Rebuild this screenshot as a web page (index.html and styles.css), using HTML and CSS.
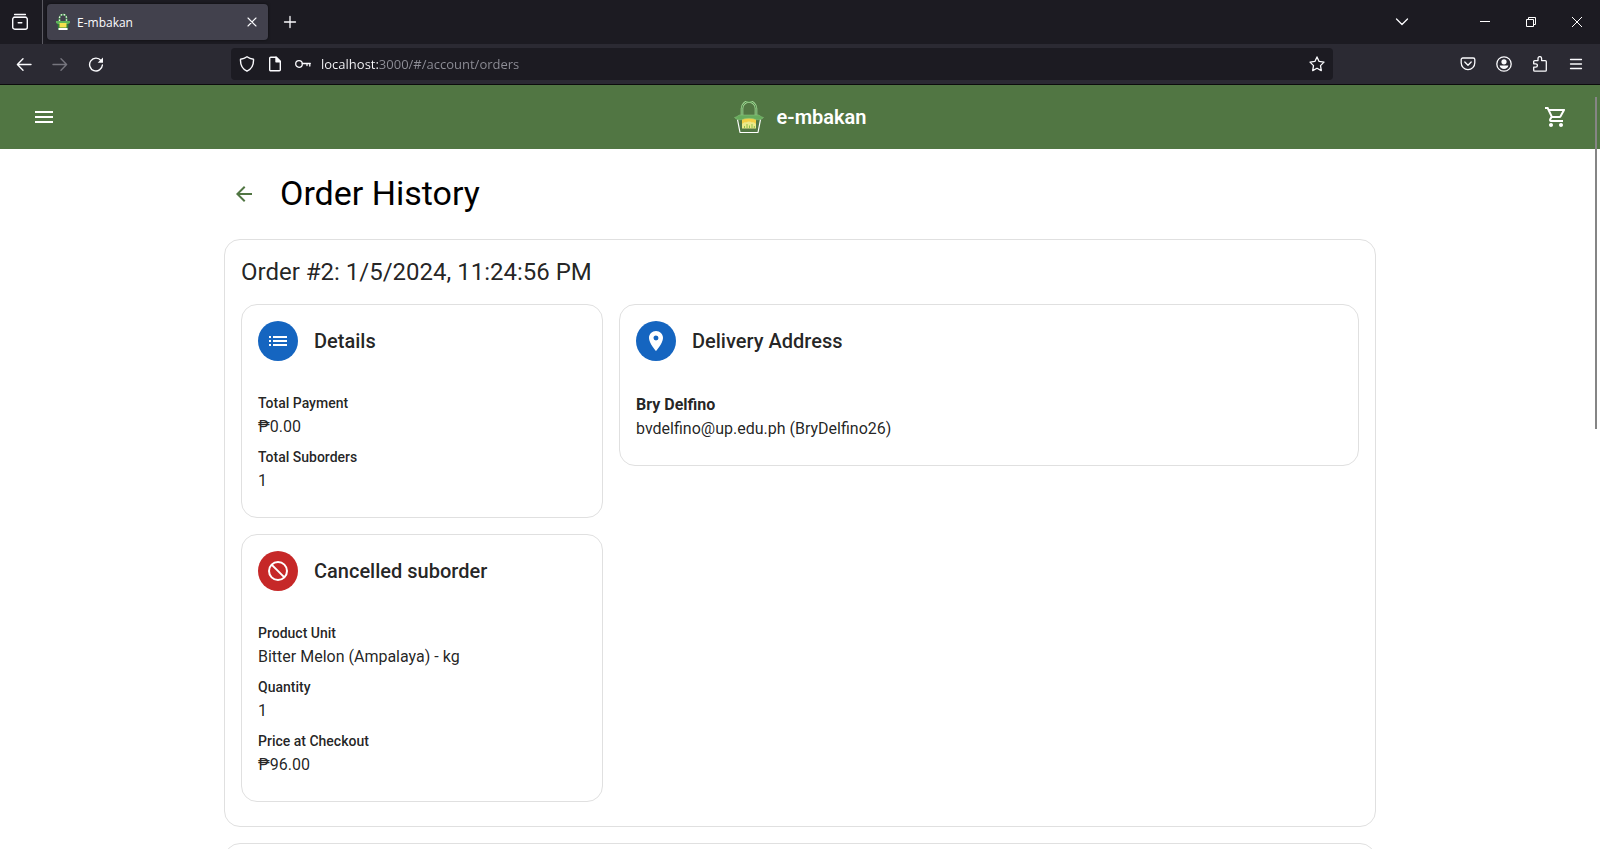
FILE: index.html
```html
<!DOCTYPE html>
<html lang="en">
<head>
<meta charset="utf-8">
<title>E-mbakan</title>
<link rel="stylesheet" href="styles.css">
</head>
<body>
<div class="window">
  <div class="tab-strip">
    <div class="tab-view">
      <button class="chrome-btn" aria-label="Recent browsing">
        <svg width="18" height="18" viewBox="0 0 18 18" fill="none" stroke="#fbfbfe" stroke-width="1.4" stroke-linecap="round"><path d="M3.6 1.5h10.8M2.8 4.2h12.4"/><rect x="1.7" y="4.4" width="14.6" height="11.8" rx="2"/><path d="M7.2 9.8h3.6"/></svg>
      </button>
    </div>
    <div class="tab">
      <svg width="16" height="18" viewBox="0 0 16 18"><path d="M4.500 8V5a3.500 3.500 0 0 1 7 0v3" fill="none" stroke="#3f9148" stroke-width="1.600"/><path d="M4.500 8V5a3.500 3.500 0 0 1 7 0v3" fill="none" stroke="#e4f4e0" stroke-width="1.400" stroke-dasharray="1.500 1.500"/><path d="M2.500 10h11l-.5 7H3z" fill="#2f7d3a"/><path d="M1 8h14v2l-2 1H3l-2-1z" fill="#5fb559"/><path d="M4.500 10h7v4.500h-7z" fill="#f5e14d"/><path d="M3.500 15h9v2h-9z" fill="#fff"/></svg>
      <span class="tab-label">E-mbakan</span>
      <button class="tab-close" aria-label="Close tab">
        <svg width="10" height="10" viewBox="0 0 10 10" stroke="#fbfbfe" stroke-width="1.1" stroke-linecap="round"><path d="M1 1l8 8M9 1l-8 8"/></svg>
      </button>
    </div>
    <button class="chrome-btn" aria-label="New tab">
      <svg width="14" height="14" viewBox="0 0 14 14" stroke="#fbfbfe" stroke-width="1.3" stroke-linecap="round"><path d="M7 1.500v11M1.500 7h11"/></svg>
    </button>
    <div class="spacer"></div>
    <button class="chrome-btn tab-list" aria-label="List all tabs">
      <svg width="14" height="14" viewBox="0 0 14 14" fill="none" stroke="#fbfbfe" stroke-width="1.3" stroke-linecap="round" stroke-linejoin="round"><path d="M1.500 4L7 9.500 12.500 4"/></svg>
    </button>
    <button class="win-btn" aria-label="Minimize"><svg width="10" height="10" viewBox="0 0 10 10" stroke="#fff"><path d="M0 4.500h10"/></svg></button>
    <button class="win-btn" aria-label="Restore"><svg width="10" height="10" viewBox="0 0 10 10" fill="none" stroke="#fff"><path d="M.5 2.500h7v7h-7zM2.500 2.500v-2h7v7h-2"/></svg></button>
    <button class="win-btn" aria-label="Close"><svg width="10" height="10" viewBox="0 0 10 10" stroke="#fff"><path d="M0 0l10 10M10 0L0 10"/></svg></button>
  </div>

  <div class="nav-bar">
    <button class="nav-btn" aria-label="Back"><svg width="16" height="16" viewBox="0 0 16 16" fill="none" stroke="#fbfbfe" stroke-width="1.400" stroke-linecap="round" stroke-linejoin="round"><path d="M15 8.500H1.500M7 2.800L1.400 8.500 7 14.200"/></svg></button>
    <button class="nav-btn" aria-label="Forward" disabled><svg width="16" height="16" viewBox="0 0 16 16" fill="none" stroke="#76757e" stroke-width="1.400" stroke-linecap="round" stroke-linejoin="round"><path d="M1 8.500h13.500M9 2.800l5.600 5.700L9 14.200"/></svg></button>
    <button class="nav-btn" aria-label="Reload"><svg width="16" height="16" viewBox="0 0 16 16"><path d="M13 4.500A6.400 6.400 0 1 0 14.400 9" fill="none" stroke="#fbfbfe" stroke-width="1.400" stroke-linecap="round"/><path d="M15 1.500v5.300h-5.300z" fill="#fbfbfe"/></svg></button>
    <div class="spacer"></div>
    <div class="url-bar">
      <svg width="16" height="16" viewBox="0 0 16 16" fill="none" stroke="#fbfbfe" stroke-width="1.400" stroke-linejoin="round"><path d="M8 .8c2 1.500 4 2.200 6.500 2.400.3 5.500-1.700 9.800-6.500 12-4.800-2.200-6.800-6.500-6.500-12C4 3 6 2.300 8 .8z"/></svg>
      <svg width="16" height="16" viewBox="0 0 16 16" fill="none" stroke="#fbfbfe" stroke-width="1.400" stroke-linejoin="round"><path d="M3.700 1.300h5.600l4 4v8.400a1 1 0 0 1-1 1H3.700a1 1 0 0 1-1-1V2.300a1 1 0 0 1 1-1z"/><path d="M9 1.300v4.400h4.300z" fill="#fbfbfe"/></svg>
      <svg width="16" height="16" viewBox="0 0 16 16" fill="none" stroke="#fbfbfe" stroke-width="1.300" stroke-linecap="round"><circle cx="4" cy="8" r="3.300"/><path d="M7.300 7.500h8M12 7.500v2M14.800 7.500v2.500"/></svg>
      <input class="url-input" type="text" aria-label="Address" value="localhost:3000/#/account/orders" spellcheck="false">
      <button class="star-btn" aria-label="Bookmark this page"><svg width="16" height="16" viewBox="0 0 16 16" fill="none" stroke="#fbfbfe" stroke-width="1.300" stroke-linejoin="round"><path d="M8 .9l2.100 4.500 4.900.7-3.500 3.500.8 5L8 12.200l-4.300 2.400.8-5L1 6.100l4.900-.7z"/></svg></button>
    </div>
    <div class="spacer"></div>
    <div class="nav-tools">
      <button class="nav-btn" aria-label="Save to Pocket"><svg width="16" height="16" viewBox="0 0 16 16" fill="none" stroke="#fbfbfe" stroke-width="1.300" stroke-linecap="round" stroke-linejoin="round"><path d="M2.800 2h10.400a1.600 1.600 0 0 1 1.600 1.600v3.200a6.800 6.800 0 0 1-13.600 0V3.600A1.600 1.600 0 0 1 2.800 2zM4.800 6L8 9.200 11.200 6"/></svg></button>
      <button class="nav-btn" aria-label="Account"><svg width="16" height="16" viewBox="0 0 16 16"><circle cx="8" cy="8" r="7.200" fill="none" stroke="#fbfbfe" stroke-width="1.300"/><circle cx="8" cy="5.800" r="2.600" fill="#fbfbfe"/><path d="M3.600 9.500h8.800c-.4 2-2.200 3.500-4.400 3.500s-4-1.500-4.400-3.500z" fill="#fbfbfe"/></svg></button>
      <button class="nav-btn" aria-label="Extensions"><svg width="16" height="16" viewBox="0 0 16 16" fill="none" stroke="#fbfbfe" stroke-width="1.300" stroke-linejoin="round"><path d="M6 4.600V2.400a1.800 1.800 0 0 1 3.600 0v2.200h3.700a1 1 0 0 1 1 1v8.600a1 1 0 0 1-1 1H2.700a1 1 0 0 1-1-1v-3h2a1.700 1.700 0 0 0 0-3.400h-2V5.600a1 1 0 0 1 1-1z"/></svg></button>
      <button class="nav-btn" aria-label="Application menu"><svg width="16" height="16" viewBox="0 0 16 16" stroke="#fbfbfe" stroke-width="1.300" stroke-linecap="round"><path d="M2.500 3.500h11M2.500 8h11M2.500 12.500h11"/></svg></button>
    </div>
  </div>

  <div class="viewport">
    <header class="app-bar">
      <button class="icon-btn" aria-label="Menu"><svg width="24" height="24" viewBox="0 0 24 24" fill="#fff"><path d="M3 18h18v-2H3v2zm0-5h18v-2H3v2zm0-7v2h18V6H3z"/></svg></button>
      <a class="brand" href="#/">
        <svg width="30" height="33" viewBox="0 0 30 33" fill="none">
          <path d="M8 15V7.500a7 7 0 0 1 14 0V15" stroke="#a3d596" stroke-width="2.600"/>
          <path d="M8 15V7.500a7 7 0 0 1 14 0V15" stroke="#4f8a48" stroke-width="1"/>
          <path d="M3.500 18.500l2.500 13h18l2.500-13" stroke="#fff" stroke-width="1.200" stroke-linejoin="round"/>
          <path d="M8 17h14v10.500H8z" fill="#ece98a"/>
          <path d="M8 17h14v6c-1.500-1.500-3-2-4-1.500-1.500-1.500-4.500-1.500-6 0-1-.5-2.500 0-4 1.500z" fill="#f3cf45"/>
          <path d="M10.500 27v-2M13 27v-4M15.500 27v-2.500M18 27v-4M20.300 27v-2" stroke="#8fbf4a" stroke-width="1"/>
          <path d="M.5 16.500C3 16 4 14.500 5.500 14h19c1.500.5 2.500 2 5 2.500-1.500 2-4 2.500-7 2.200-2-.4-3.500-1.400-7.500-1.400s-5.500 1-7.500 1.400c-3 .3-5.500-.2-7-2.200z" fill="#67ac5d" stroke="#8cc781" stroke-width=".5"/>
        </svg>
        <span>e-mbakan</span>
      </a>
      <button class="icon-btn" aria-label="Cart"><svg width="24" height="24" viewBox="0 0 24 24" fill="#fff"><path d="M15.550 13c.75 0 1.410-.41 1.750-1.030l3.580-6.490A.996.996 0 0 0 20.010 4H5.210l-.94-2H1v2h2l3.600 7.590-1.350 2.440C4.520 15.370 5.480 17 7 17h12v-2H7l1.100-2h7.450zM6.160 6h12.150l-2.760 5H8.530L6.160 6zM7 18c-1.100 0-1.990.9-1.990 2S5.900 22 7 22s2-.9 2-2-.9-2-2-2zm10 0c-1.100 0-1.990.9-1.990 2s.89 2 1.990 2 2-.9 2-2-.9-2-2-2z"/></svg></button>
    </header>

    <main class="container">
      <div class="page-title">
        <button class="icon-btn" aria-label="Go back"><svg width="24" height="24" viewBox="0 0 24 24" fill="#517643"><path d="M20 11H7.830l5.590-5.590L12 4l-8 8 8 8 1.410-1.410L7.830 13H20v-2z"/></svg></button>
        <h1>Order History</h1>
      </div>

      <section class="card order">
        <h2>Order #2: 1/5/2024, 11:24:56 PM</h2>
        <div class="grid">
          <article class="card">
            <div class="card-header">
              <span class="avatar blue"><svg width="24" height="24" viewBox="0 0 24 24" fill="#fff"><path d="M3 13h2v-2H3v2zm0 4h2v-2H3v2zm0-8h2V7H3v2zm4 4h14v-2H7v2zm0 4h14v-2H7v2zM7 7v2h14V7H7z"/></svg></span>
              <h3>Details</h3>
            </div>
            <dl class="card-content">
              <div><dt>Total Payment</dt><dd>₱0.00</dd></div>
              <div><dt>Total Suborders</dt><dd>1</dd></div>
            </dl>
          </article>
          <article class="card wide">
            <div class="card-header">
              <span class="avatar blue"><svg width="24" height="24" viewBox="0 0 24 24" fill="#fff"><path d="M12 2C8.130 2 5 5.130 5 9c0 5.250 7 13 7 13s7-7.750 7-13c0-3.870-3.130-7-7-7zm0 9.500a2.500 2.500 0 0 1 0-5 2.500 2.500 0 0 1 0 5z"/></svg></span>
              <h3>Delivery Address</h3>
            </div>
            <div class="card-content address">
              <p><strong>Bry Delfino</strong></p>
              <p>bvdelfino@up.edu.ph (BryDelfino26)</p>
            </div>
          </article>
          <article class="card">
            <div class="card-header">
              <span class="avatar red"><svg width="24" height="24" viewBox="0 0 24 24" fill="none" stroke="#fff" stroke-width="2"><circle cx="12" cy="12" r="9"/><path d="M5.600 5.600l12.800 12.800"/></svg></span>
              <h3>Cancelled suborder</h3>
            </div>
            <dl class="card-content">
              <div><dt>Product Unit</dt><dd>Bitter Melon (Ampalaya) - kg</dd></div>
              <div><dt>Quantity</dt><dd>1</dd></div>
              <div><dt>Price at Checkout</dt><dd>₱96.00</dd></div>
            </dl>
          </article>
        </div>
      </section>

      <section class="card order next"></section>
    </main>
    <div class="scroll-thumb"></div>
  </div>
</div>
</body>
</html>
```

FILE: styles.css
```css
* {
  box-sizing: border-box;
}

body,
h1,
h2,
h3,
p,
dl,
dd {
  margin: 0;
}

body {
  font-family: Roboto, sans-serif;
  font-size: 16px;
  line-height: 24px;
  color: rgba(0, 0, 0, 0.87);
  background: #fff;
}

svg {
  display: block;
  flex: none;
}

button {
  display: flex;
  align-items: center;
  justify-content: center;
  flex: none;
  padding: 0;
  border: 0;
  background: none;
}

.window {
  display: flex;
  flex-direction: column;
  height: 100vh;
  overflow: hidden;
}

.spacer {
  flex: 1;
}

/* Browser tabs */
.tab-strip {
  display: flex;
  align-items: center;
  flex: none;
  height: 44px;
  background: #1c1b22;
}

.tab-view {
  display: flex;
  align-self: stretch;
  align-items: center;
  width: 43px;
  padding-left: 2px;
  border-right: 1px solid #5b5a62;
}

.chrome-btn {
  width: 36px;
  height: 36px;
}

.tab {
  display: flex;
  align-items: center;
  gap: 6px;
  width: 221px;
  height: 36px;
  margin: 0 4px;
  padding: 0 6px 0 8px;
  border-radius: 4px;
  background: #42414d;
  box-shadow: 0 0 3px rgba(0, 0, 0, 0.6);
}

.tab-label {
  flex: 1;
  padding-top: 2px;
  font: 12px/16px "Open Sans", "Noto Sans", sans-serif;
  color: #fbfbfe;
}

.tab-close {
  width: 20px;
  height: 20px;
}

.tab-list {
  margin-right: 42px;
}

.win-btn {
  width: 46px;
  height: 44px;
}

/* Address row */
.nav-bar {
  display: flex;
  align-items: center;
  flex: none;
  height: 41px;
  padding: 0 6px;
  border-bottom: 1px solid #0c0c0d;
  background: #2b2a33;
}

.nav-btn {
  width: 36px;
  height: 32px;
}

.nav-tools {
  display: flex;
}

.url-bar {
  display: flex;
  align-items: center;
  gap: 12px;
  flex: 0 1 1102px;
  height: 32px;
  padding: 0 8px;
  border-radius: 4px;
  background: #1c1b22;
}

.url-input {
  flex: 1;
  min-width: 0;
  height: 32px;
  margin-left: -2px;
  padding: 0;
  border: 0;
  outline: 0;
  font: 13px/20px "Open Sans", "Noto Sans", sans-serif;
  color: transparent;
  background: linear-gradient(90deg, #fbfbfe 57px, #8f8f98 57px);
  background-clip: text;
  -webkit-background-clip: text;
}

.star-btn {
  width: 16px;
  height: 32px;
}

/* Page */
.viewport {
  position: relative;
  flex: 1;
  min-height: 0;
  overflow: hidden;
}

.app-bar {
  display: flex;
  align-items: center;
  justify-content: space-between;
  height: 64px;
  padding: 0 24px;
  background: #517643;
}

.icon-btn {
  width: 40px;
  height: 40px;
}

.brand {
  display: flex;
  align-items: center;
  gap: 13px;
  font-size: 20px;
  font-weight: 600;
  color: #fff;
  text-decoration: none;
}

.container {
  display: flex;
  flex-direction: column;
  gap: 16px;
  max-width: 1200px;
  margin: 0 auto;
  padding: 24px;
}

.page-title {
  display: flex;
  align-items: center;
  gap: 16px;
  margin-bottom: 8px;
  color: #000;
}

.page-title h1 {
  padding-bottom: 2px;
  font-size: 34px;
  font-weight: 400;
  line-height: 40px;
}

.card {
  border: 1px solid #e0e0e0;
  border-radius: 16px;
  background: #fff;
}

.order {
  padding: 16px 16px 24px;
}

.order h2 {
  margin-bottom: 16px;
  font-size: 24px;
  font-weight: 400;
  line-height: 32px;
}

.grid {
  display: grid;
  grid-template-columns: repeat(3, 1fr);
  align-items: start;
  gap: 16px;
}

.wide {
  grid-column: span 2;
}

.card-header {
  display: flex;
  align-items: center;
  gap: 16px;
  padding: 16px;
}

.card-header h3 {
  font-size: 20px;
  font-weight: 500;
  line-height: 32px;
}

.avatar {
  display: flex;
  align-items: center;
  justify-content: center;
  width: 40px;
  height: 40px;
  border-radius: 50%;
}

.blue {
  background: #1565c0;
}

.red {
  background: #c62828;
}

.card-content {
  display: flex;
  flex-direction: column;
  gap: 8px;
  padding: 16px 16px 24px;
}

.address {
  gap: 0;
}

dt {
  padding-bottom: 2px;
  font-size: 14px;
  font-weight: 500;
  line-height: 20px;
}

.next {
  min-height: 320px;
}

/* Overlay scrollbar */
.scroll-thumb {
  position: absolute;
  top: 12px;
  right: 3px;
  width: 2px;
  height: 332px;
  background: #858585;
}
```
